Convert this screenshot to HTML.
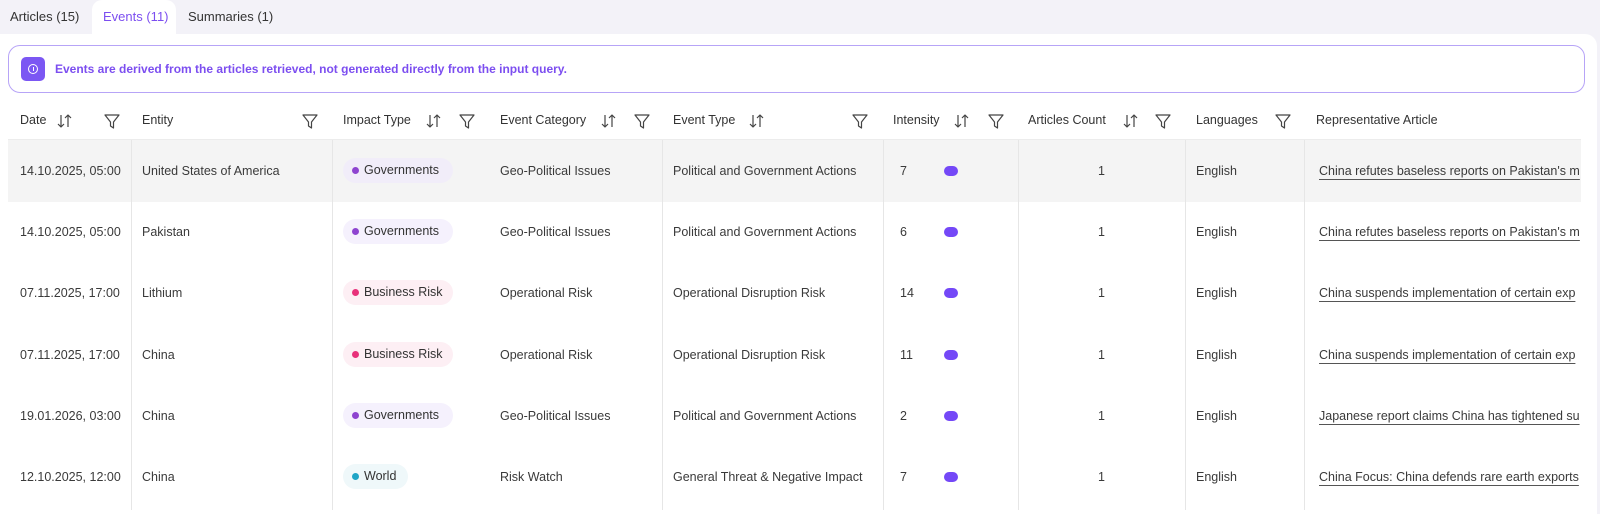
<!DOCTYPE html>
<html><head><meta charset="utf-8"><style>
*{margin:0;padding:0;box-sizing:border-box}
body{width:1600px;height:505px;overflow:hidden;background:#f3f2f8;font-family:"Liberation Sans",sans-serif;font-size:12.5px;color:#3a3a3a;position:relative}
.a{position:absolute;white-space:nowrap}
.tab{top:9px;font-size:13px;color:#333}
.panel{position:absolute;left:0;top:34px;width:1597px;height:480px;background:#fff;border-top-right-radius:12px}
.vl{position:absolute;top:140px;width:1px;height:370px;background:#e6e6e6}
.h{top:113px;color:#333}
.c{line-height:16px}
.pill{position:absolute;height:25px;border-radius:13px;padding-left:21px;line-height:25px;color:#333}
.pill i{position:absolute;left:9px;top:9px;width:7px;height:7px;border-radius:50%}
.ip{position:absolute;width:14px;height:10px;border-radius:5px;background:#7448f7}
.lk{text-decoration:underline;text-underline-offset:4px;text-decoration-color:#555}
svg{position:absolute}
</style></head><body>
<div class="a" style="left:92px;top:0;width:84px;height:40px;background:#fff;border-radius:10px 10px 0 0"></div>
<div class="a tab" style="left:10px">Articles (15)</div>
<div class="a tab" style="left:103px;color:#7c4ef0">Events (11)</div>
<div class="a tab" style="left:188px">Summaries (1)</div>
<div class="panel"></div>
<div class="a" style="left:8px;top:45px;width:1577px;height:48px;border:1px solid #b7a4f7;border-radius:12px;background:#fff"></div>
<div class="a" style="left:21px;top:57px;width:24px;height:24px;border-radius:5px;background:#7b57f3"></div>
<div class="a" style="left:28px;top:64px;width:10px;height:10px;border-radius:50%;border:1.5px solid #fff"></div>
<div class="a" style="left:32.5px;top:67px;width:1px;height:4px;background:#fff"></div>
<div class="a" style="left:55px;top:62px;color:#7c4ef0;font-weight:bold;font-size:12px">Events are derived from the articles retrieved, not generated directly from the input query.</div>

<div class="a" style="left:8px;top:140px;width:1573px;height:62px;background:#f4f4f4"></div>
<div class="a" style="left:8px;top:139px;width:1573px;height:1px;background:#ececec"></div>
<div class="vl" style="left:131px"></div><div class="vl" style="left:332px"></div><div class="vl" style="left:662px"></div><div class="vl" style="left:883px"></div><div class="vl" style="left:1018px"></div><div class="vl" style="left:1185px"></div><div class="vl" style="left:1304px"></div>

<div class="a h" style="left:20px">Date</div>
<div class="a h" style="left:142px">Entity</div>
<div class="a h" style="left:343px">Impact Type</div>
<div class="a h" style="left:500px">Event Category</div>
<div class="a h" style="left:673px">Event Type</div>
<div class="a h" style="left:893px">Intensity</div>
<div class="a h" style="left:1028px">Articles Count</div>
<div class="a h" style="left:1196px">Languages</div>
<div class="a h" style="left:1316px">Representative Article</div>

<svg width="1600" height="140" style="left:0;top:0" fill="none" stroke="#444" stroke-width="1.2" stroke-linejoin="round">
<defs><g id="f"><path d="M0 0H14L8.5 7V13L5.5 11V7Z"/></g><g id="s"><path d="M3 0V12M0 9L3 12L6 9M10 12V0M7 3L10 0L13 3"/></g></defs>
<use href="#f" x="105" y="115"/><use href="#f" x="303" y="115"/><use href="#f" x="460" y="115"/><use href="#f" x="635" y="115"/><use href="#f" x="853" y="115"/><use href="#f" x="989" y="115"/><use href="#f" x="1156" y="115"/><use href="#f" x="1276" y="115"/>
<use href="#s" x="58" y="115"/><use href="#s" x="427" y="115"/><use href="#s" x="602" y="115"/><use href="#s" x="750" y="115"/><use href="#s" x="955" y="115"/><use href="#s" x="1124" y="115"/>
</svg>

<div id="rows"></div>
<script>
var d=[["14.10.2025, 05:00","United States of America","Governments","Geo-Political Issues","Political and Government Actions","7","China refutes baseless reports on Pakistan's m"],
["14.10.2025, 05:00","Pakistan","Governments","Geo-Political Issues","Political and Government Actions","6","China refutes baseless reports on Pakistan's m"],
["07.11.2025, 17:00","Lithium","Business Risk","Operational Risk","Operational Disruption Risk","14","China suspends implementation of certain exp"],
["07.11.2025, 17:00","China","Business Risk","Operational Risk","Operational Disruption Risk","11","China suspends implementation of certain exp"],
["19.01.2026, 03:00","China","Governments","Geo-Political Issues","Political and Government Actions","2","Japanese report claims China has tightened su"],
["12.10.2025, 12:00","China","World","Risk Watch","General Threat & Negative Impact","7","China Focus: China defends rare earth exports"]];
var P={"Governments":["#f5f1fd","#8e44d0",110],"Business Risk":["#fdeff4","#e8317a",110],"World":["#eff8fa","#1fa5c6",65]};
var h="";
d.forEach(function(r,i){var cy=171+i*61.2;var t=cy-8;var p=P[r[2]];
h+='<div class="a c" style="left:20px;top:'+t+'px">'+r[0]+'</div>';
h+='<div class="a c" style="left:142px;top:'+t+'px">'+r[1]+'</div>';
h+='<div class="pill" style="left:343px;top:'+(cy-13)+'px;width:'+p[2]+'px;background:'+(i==0?'#f1edf9':p[0])+'"><i style="background:'+p[1]+'"></i>'+r[2]+'</div>';
h+='<div class="a c" style="left:500px;top:'+t+'px">'+r[3]+'</div>';
h+='<div class="a c" style="left:673px;top:'+t+'px">'+r[4]+'</div>';
h+='<div class="a c" style="left:900px;top:'+t+'px">'+r[5]+'</div>';
h+='<div class="ip" style="left:944px;top:'+(cy-5)+'px"></div>';
h+='<div class="a c" style="left:1098px;top:'+t+'px">1</div>';
h+='<div class="a c" style="left:1196px;top:'+t+'px">English</div>';
h+='<div class="a c" style="left:1319px;top:'+t+'px;width:262px;overflow:hidden;height:22px"><span class="lk">'+r[6]+'</span></div>';});
document.getElementById("rows").innerHTML=h;
</script>
</body></html>
